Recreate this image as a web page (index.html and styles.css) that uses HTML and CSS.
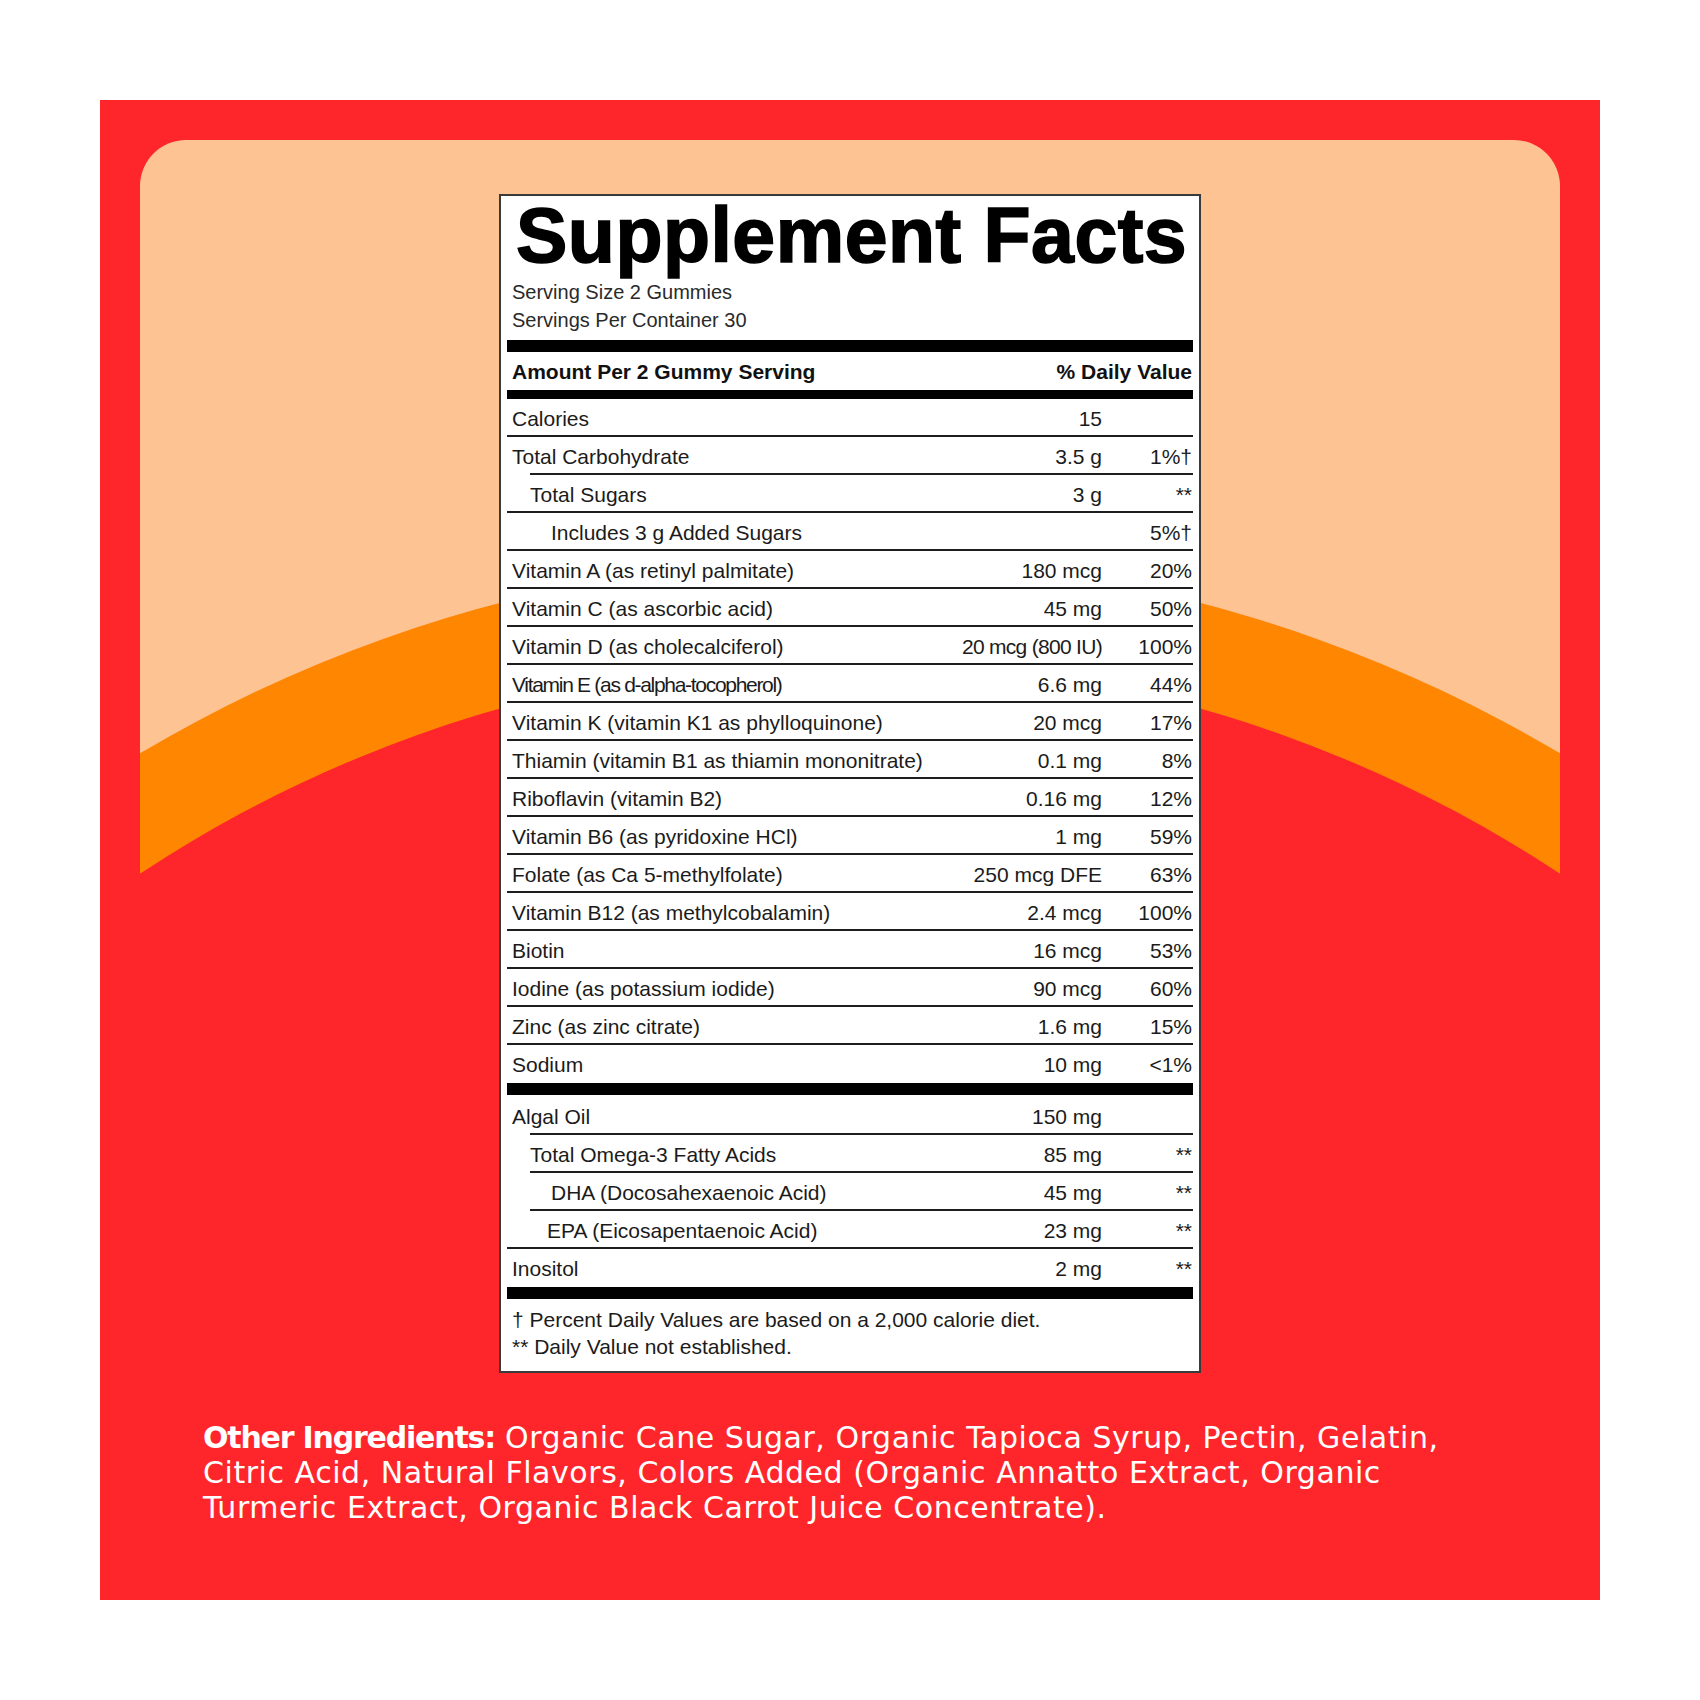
FILE: index.html
```html
<!DOCTYPE html>
<html lang="en">
<head>
<meta charset="utf-8">
<title>Supplement Facts</title>
<link rel="stylesheet" href="styles.css">
</head>
<body>
<div class="poster">
  <svg class="backdrop" width="1500" height="1500" viewBox="0 0 1500 1500" aria-hidden="true">
    <defs>
      <clipPath id="panel-clip">
        <rect x="40" y="40" width="1420" height="1700" rx="46" ry="46"/>
      </clipPath>
    </defs>
    <g clip-path="url(#panel-clip)">
      <rect x="40" y="40" width="1420" height="1700" fill="#FDC393"/>
      <circle cx="750" cy="1846" r="1388" fill="#FF8600"/>
      <circle cx="750" cy="1846" r="1286" fill="#FF262B"/>
    </g>
  </svg>

  <div class="content">
    <section class="label">
      <h1 class="title">Supplement Facts</h1>
      <div class="serving">
        <div>Serving Size 2 Gummies</div>
        <div>Servings Per Container 30</div>
      </div>
      <div class="bar bar-thick"></div>
      <div class="head-row">
        <span>Amount Per 2 Gummy Serving</span>
        <span>% Daily Value</span>
      </div>
      <div class="bar bar-mid"></div>

      <div class="row line"><span class="name">Calories</span><span class="amt">15</span><span class="dv"></span></div>
      <div class="row line-indent"><span class="name">Total Carbohydrate</span><span class="amt">3.5 g</span><span class="dv">1%†</span></div>
      <div class="row line"><span class="name ind1">Total Sugars</span><span class="amt">3 g</span><span class="dv">**</span></div>
      <div class="row line"><span class="name ind2">Includes 3 g Added Sugars</span><span class="amt"></span><span class="dv">5%†</span></div>
      <div class="row line"><span class="name">Vitamin A (as retinyl palmitate)</span><span class="amt">180 mcg</span><span class="dv">20%</span></div>
      <div class="row line"><span class="name">Vitamin C (as ascorbic acid)</span><span class="amt">45 mg</span><span class="dv">50%</span></div>
      <div class="row line"><span class="name">Vitamin D (as cholecalciferol)</span><span class="amt tight-amt">20 mcg (800 IU)</span><span class="dv">100%</span></div>
      <div class="row line"><span class="name tight">Vitamin E (as d-alpha-tocopherol)</span><span class="amt">6.6 mg</span><span class="dv">44%</span></div>
      <div class="row line"><span class="name">Vitamin K (vitamin K1 as phylloquinone)</span><span class="amt">20 mcg</span><span class="dv">17%</span></div>
      <div class="row line"><span class="name">Thiamin (vitamin B1 as thiamin mononitrate)</span><span class="amt">0.1 mg</span><span class="dv">8%</span></div>
      <div class="row line"><span class="name">Riboflavin (vitamin B2)</span><span class="amt">0.16 mg</span><span class="dv">12%</span></div>
      <div class="row line"><span class="name">Vitamin B6 (as pyridoxine HCl)</span><span class="amt">1 mg</span><span class="dv">59%</span></div>
      <div class="row line"><span class="name">Folate (as Ca 5-methylfolate)</span><span class="amt">250 mcg DFE</span><span class="dv">63%</span></div>
      <div class="row line"><span class="name">Vitamin B12 (as methylcobalamin)</span><span class="amt">2.4 mcg</span><span class="dv">100%</span></div>
      <div class="row line"><span class="name">Biotin</span><span class="amt">16 mcg</span><span class="dv">53%</span></div>
      <div class="row line"><span class="name">Iodine (as potassium iodide)</span><span class="amt">90 mcg</span><span class="dv">60%</span></div>
      <div class="row line"><span class="name">Zinc (as zinc citrate)</span><span class="amt">1.6 mg</span><span class="dv">15%</span></div>
      <div class="row"><span class="name">Sodium</span><span class="amt">10 mg</span><span class="dv">&lt;1%</span></div>

      <div class="bar bar-thick"></div>

      <div class="row row-first line-indent"><span class="name">Algal Oil</span><span class="amt">150 mg</span><span class="dv"></span></div>
      <div class="row line-indent"><span class="name ind1">Total Omega-3 Fatty Acids</span><span class="amt">85 mg</span><span class="dv">**</span></div>
      <div class="row line-indent"><span class="name ind2">DHA (Docosahexaenoic Acid)</span><span class="amt">45 mg</span><span class="dv">**</span></div>
      <div class="row line"><span class="name ind2b">EPA (Eicosapentaenoic Acid)</span><span class="amt">23 mg</span><span class="dv">**</span></div>
      <div class="row"><span class="name">Inositol</span><span class="amt">2 mg</span><span class="dv">**</span></div>

      <div class="bar bar-thick"></div>

      <div class="notes">
        <div>† Percent Daily Values are based on a 2,000 calorie diet.</div>
        <div>** Daily Value not established.</div>
      </div>
    </section>

    <p class="ingredients"><strong>Other Ingredients:</strong> Organic Cane Sugar, Organic Tapioca Syrup, Pectin, Gelatin,<br>Citric Acid, Natural Flavors, Colors Added (Organic Annatto Extract, Organic<br>Turmeric Extract, Organic Black Carrot Juice Concentrate).</p>
  </div>
</div>
</body>
</html>
```

FILE: styles.css
```css
* { box-sizing: border-box; }

html, body {
  margin: 0;
  padding: 0;
  background: #ffffff;
}

body {
  font-family: "Liberation Sans", Arial, sans-serif;
}

.poster {
  position: relative;
  width: 1500px;
  height: 1500px;
  margin: 100px;
  background: #FF262B;
  overflow: hidden;
}

.backdrop {
  position: absolute;
  left: 0;
  top: 0;
  display: block;
}

.content {
  position: relative;
  padding-top: 94px;
}

/* ---------- label ---------- */
.label {
  width: 702px;
  margin-left: 399px;
  background: #ffffff;
  border: 2px solid #3a3a3a;
  padding: 0 6px;
  color: #1b1b1b;
  font-size: 21px;
}

.title {
  margin: 1px 0 0 9px;
  font-family: "Liberation Sans", Arial, sans-serif;
  font-weight: 700;
  font-size: 77px;
  line-height: 77px;
  color: #000;
  -webkit-text-stroke: 1.6px #000;
  letter-spacing: 0.5px;
  white-space: nowrap;
}

.serving {
  margin-top: 4px;
  padding-left: 5px;
  font-size: 20px;
  line-height: 28px;
  color: #2a2a2a;
}

.bar { background: #000; }
.bar-thick { height: 12px; }
.bar-mid { height: 9px; }
.serving + .bar { margin-top: 6px; }

.head-row {
  display: flex;
  justify-content: space-between;
  height: 38px;
  padding: 2px 1px 0 5px;
  line-height: 36px;
  font-weight: 700;
  font-size: 21px;
  color: #111;
}

.row {
  display: grid;
  grid-template-columns: 1fr auto 90px;
  height: 38px;
  padding: 4px 1px 2px 5px;
  line-height: 32px;
  white-space: nowrap;
}

.row.line {
  background: linear-gradient(#1e1e1e, #1e1e1e) no-repeat left bottom / 100% 2px;
}

.row.line-indent {
  background: linear-gradient(#1e1e1e, #1e1e1e) no-repeat right bottom / calc(100% - 23px) 2px;
}

.row-first {
  height: 40px;
  padding-top: 5px;
  line-height: 33px;
}

.amt, .dv { text-align: right; }

.ind1 { padding-left: 18px; }
.ind2 { padding-left: 39px; }
.ind2b { padding-left: 35px; }

.tight { letter-spacing: -1.3px; }
.tight-amt { letter-spacing: -0.7px; }

.notes {
  padding: 7px 0 11px 5px;
  font-size: 21px;
  line-height: 27px;
  color: #1b1b1b;
}

/* ---------- ingredients ---------- */
.ingredients {
  margin: 47px 0 0 103px;
  font-family: "DejaVu Sans", "Liberation Sans", sans-serif;
  font-size: 30px;
  line-height: 35px;
  letter-spacing: 0.55px;
  color: #ffffff;
  white-space: nowrap;
}

.ingredients strong {
  font-weight: 700;
  letter-spacing: -1.2px;
}
```
